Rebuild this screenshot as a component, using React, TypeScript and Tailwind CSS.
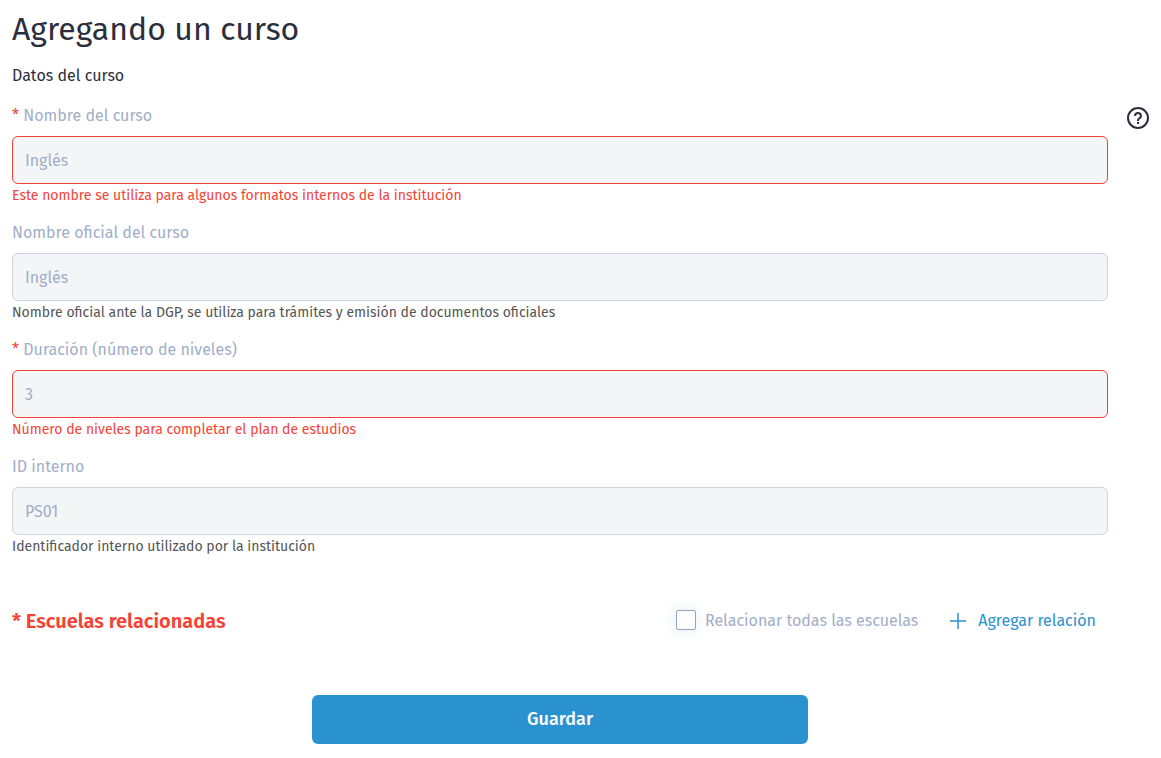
import { useId } from "react";
import type { FormEvent } from "react";

type FieldProps = {
  label: string;
  placeholder: string;
  help: string;
  required?: boolean;
  invalid?: boolean;
};

function Field({ label, placeholder, help, required = false, invalid = false }: FieldProps) {
  const id = useId();
  return (
    <div>
      <label htmlFor={id} className="block text-base leading-6 text-[#a0aec8]">
        {required && <span className="text-[#f44336]">* </span>}
        {label}
      </label>
      <input
        id={id}
        type="text"
        placeholder={placeholder}
        aria-invalid={invalid}
        aria-describedby={`${id}-help`}
        className={`mt-2 block h-12 w-full rounded-md border bg-[#f4f5f7] px-3 text-base text-[#2d3748] placeholder:text-[#a0aec8] focus:outline-none ${
          invalid ? "border-[#f44336]" : "border-[#cbd5e0]"
        }`}
      />
      <p
        id={`${id}-help`}
        className={`text-sm leading-[23px] ${invalid ? "text-[#f44336]" : "text-[#555555]"}`}
      >
        {help}
      </p>
    </div>
  );
}

function HelpIcon() {
  return (
    <svg viewBox="0 0 24 24" className="size-6" aria-hidden="true">
      <circle cx="12" cy="12" r="10" fill="none" stroke="currentColor" strokeWidth="2" />
      <path
        fill="currentColor"
        d="M11 16h2v2h-2zM12 6a3.939 3.939 0 0 0-3.934 3.934h2C10.066 8.867 10.934 8 12 8s1.934.867 1.934 1.934c0 .598-.481 1.032-1.216 1.626a9.208 9.208 0 0 0-.691.599c-.998.997-1.027 2.056-1.027 2.174V15h2l-.001-.633c.001-.016.033-.386.441-.793.15-.15.339-.3.535-.458.779-.631 1.958-1.584 1.958-3.182A3.937 3.937 0 0 0 12 6z"
      />
    </svg>
  );
}

export default function App() {
  const save = (event: FormEvent) => event.preventDefault();

  return (
    <main className="bg-white pt-2 pr-[11px] pb-3 pl-3 font-['Fira_Sans','Noto_Sans',sans-serif] text-[#2b2f3d]">
      <h1 className="text-[32px] leading-[42px]">Agregando un curso</h1>
      <h2 className="mt-3.5 text-base leading-6">Datos del curso</h2>

      <div className="mt-4 flex items-start gap-[18px]">
        <form onSubmit={save} className="min-w-0 flex-1">
          <div className="flex flex-col gap-3.5">
            <Field
              label="Nombre del curso"
              placeholder="Inglés"
              help="Este nombre se utiliza para algunos formatos internos de la institución"
              required
              invalid
            />
            <Field
              label="Nombre oficial del curso"
              placeholder="Inglés"
              help="Nombre oficial ante la DGP, se utiliza para trámites y emisión de documentos oficiales"
            />
            <Field
              label="Duración (número de niveles)"
              placeholder="3"
              help="Número de niveles para completar el plan de estudios"
              required
              invalid
            />
            <Field
              label="ID interno"
              placeholder="PS01"
              help="Identificador interno utilizado por la institución"
            />
          </div>

          <div className="mt-[39px] flex flex-wrap items-center justify-between">
            <h3 className="text-xl leading-7 font-semibold text-[#f44336]">
              * Escuelas relacionadas
            </h3>
            <div className="flex items-center gap-5">
              <label className="flex items-start gap-[9px] text-base leading-6 text-[#a0aec8]">
                <input
                  type="checkbox"
                  className="mt-px size-5 appearance-none rounded-xs border border-[#90a4c4] bg-white shadow-[0_0_15px_0_rgba(144,164,196,0.25)] checked:bg-[#2b92d0]"
                />
                Relacionar todas las escuelas
              </label>
              <button
                type="button"
                className="flex h-12 items-center gap-3 px-3 text-base text-[#2b92d0]"
              >
                <svg viewBox="0 0 16 16" className="size-4" aria-hidden="true">
                  <path d="M8 0v16M0 8h16" fill="none" stroke="currentColor" strokeWidth="1.5" />
                </svg>
                Agregar relación
              </button>
            </div>
          </div>

          <button
            type="submit"
            className="mx-auto mt-[50px] block h-[49px] w-full max-w-[496px] rounded-md bg-[#2b92d0] pb-0.5 text-lg font-medium text-white"
          >
            Guardar
          </button>
        </form>

        <button type="button" aria-label="Ayuda" className="mt-0.5">
          <HelpIcon />
        </button>
      </div>
    </main>
  );
}
